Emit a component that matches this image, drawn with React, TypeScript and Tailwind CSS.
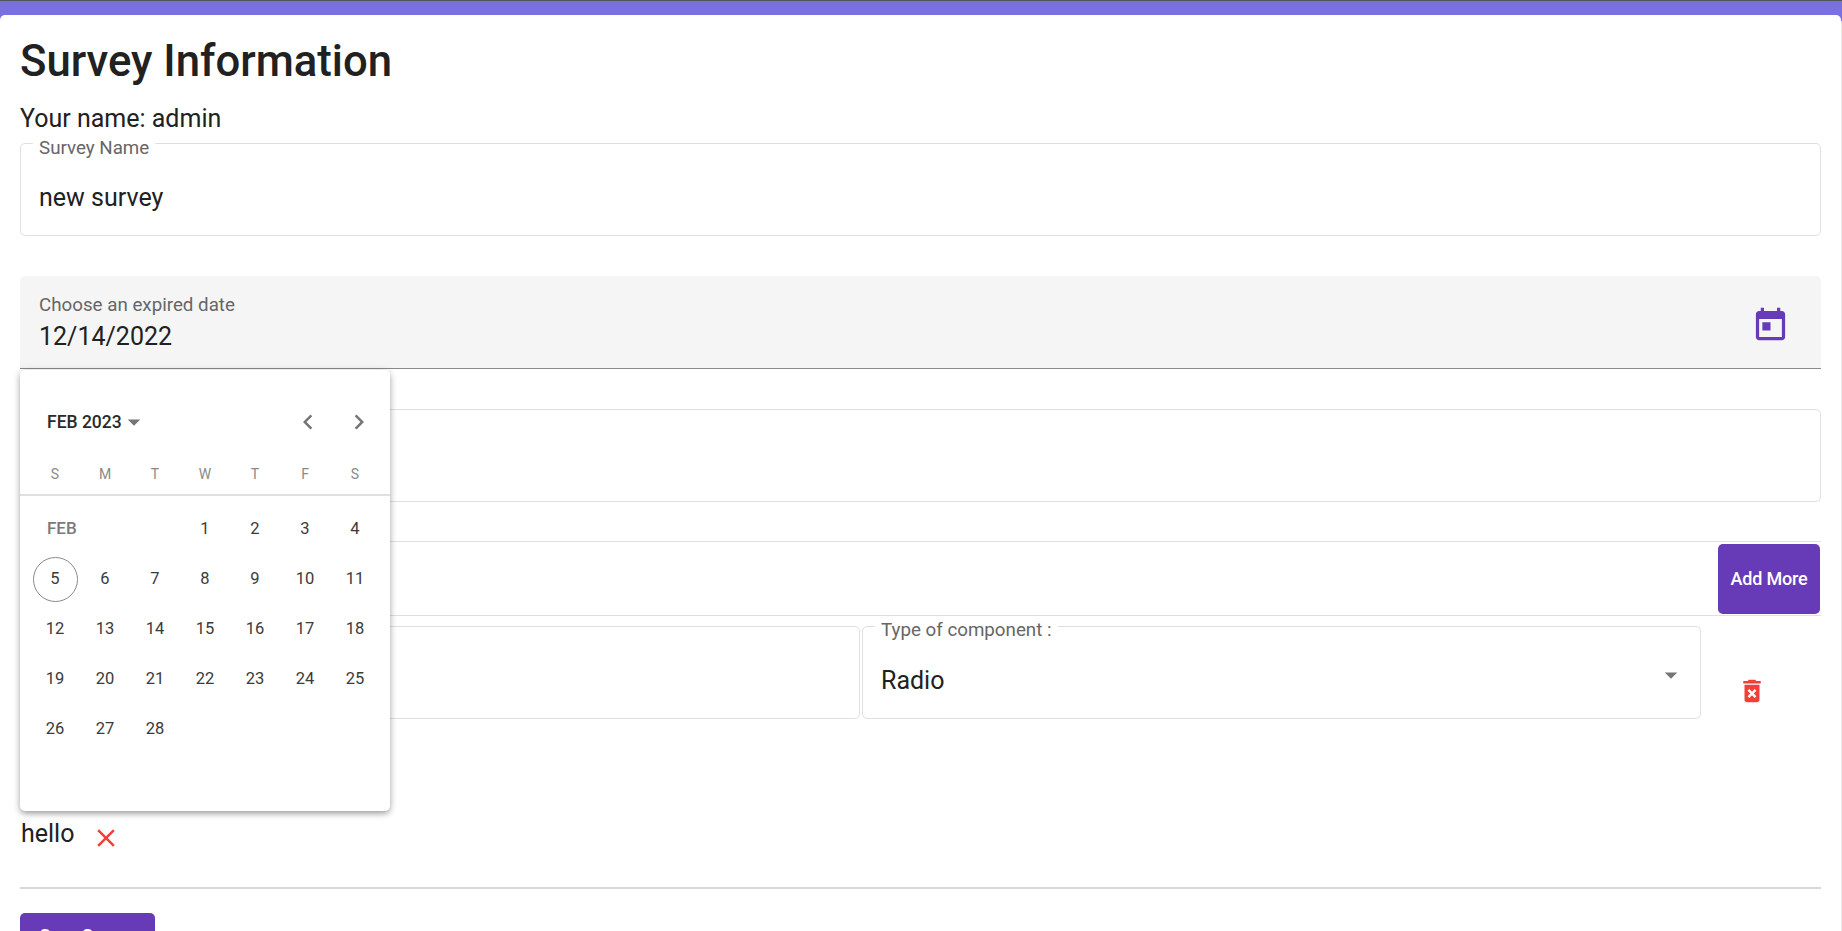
import type { ReactNode } from "react";

const roboto = { fontFamily: "Roboto, sans-serif" };

function Outlined({ label, labelClass, className, children }: { label?: string; labelClass?: string; className?: string; children?: ReactNode }) {
  return (
    <div className={`relative h-[93px] rounded-[5px] border border-[#e0e0e0] ${className ?? ""}`}>
      {label && (
        <span className={`absolute left-3 bg-white px-1.5 text-[18.75px] leading-[20px] text-[#666] ${labelClass ?? ""}`}>{label}</span>
      )}
      {children}
    </div>
  );
}

const weekdays = ["S", "M", "T", "W", "T", "F", "S"];
const days: (number | string | null)[] = [
  "FEB", null, null, 1, 2, 3, 4,
  5, 6, 7, 8, 9, 10, 11,
  12, 13, 14, 15, 16, 17, 18,
  19, 20, 21, 22, 23, 24, 25,
  26, 27, 28, null, null, null, null,
];

function CalendarPopup() {
  return (
    <div className="absolute top-[355px] left-5 h-[441px] w-[370px] rounded-[5px] bg-white shadow-[0_3px_6px_-1px_rgba(0,0,0,0.35),0_1px_10px_rgba(0,0,0,0.14)]">
      <div className="flex h-[103px] items-center pr-[16px] pl-[27px]">
        <span className="pt-[2px] text-[17.5px] font-medium text-[#2a2a2a]">FEB 2023</span>
        <svg viewBox="0 0 24 24" className="ml-[-3px] h-[30px] w-[30px] fill-[#757575]"><path d="M7 10l5 5 5-5z" /></svg>
        <svg viewBox="0 0 24 24" className="ml-auto h-[30px] w-[30px] fill-[#757575]"><path d="M15.41 16.59L10.83 12l4.58-4.59L14 6l-6 6 6 6 1.41-1.41z" /></svg>
        <svg viewBox="0 0 24 24" className="ml-[21px] h-[30px] w-[30px] fill-[#757575]"><path d="M8.59 16.59L13.17 12 8.59 7.41 10 6l6 6-6 6-1.41-1.41z" /></svg>
      </div>
      <div className="box-content grid h-[21px] grid-cols-[repeat(7,50px)] border-b-2 border-[#e0e0e0] pl-[10px]">
        {weekdays.map((d, i) => (
          <span key={i} className="mt-[-9px] text-center text-[14px] leading-[20px] text-[#8a8a8a]">{d}</span>
        ))}
      </div>
      <div className="mt-[8px] grid auto-rows-[50px] grid-cols-[repeat(7,50px)] pl-[10px]">
        {days.map((d, i) => {
          if (d === "FEB") return <span key={i} className="flex items-center pl-[17px] text-[17px] font-medium text-[#7a7a7a]">FEB</span>;
          return (
            <span key={i} className="flex items-center justify-center text-[16.5px] text-[#3a3a3a]">
              {d === 5 ? <span className="mt-[1px] flex h-[45px] w-[45px] items-center justify-center rounded-full border border-[#8a8a8a]">5</span> : d}
            </span>
          );
        })}
      </div>
    </div>
  );
}

export default function App() {
  return (
    <div className="h-[931px] overflow-hidden border-t border-[#555] bg-[linear-gradient(#7b70e0_20px,#e8e8e8_20px)]" style={roboto}>
      <div className="relative mt-[14px] mr-px h-[916px] rounded-t-[5px] bg-white pr-5 pl-5 text-[#212121]">
        <h1 className="h-[89px] pt-[21px] text-[43.7px] leading-[50px] font-medium">Survey Information</h1>
        <p className="h-[39px] text-[25px] leading-[29px]">Your name: admin</p>
        <Outlined label="Survey Name" labelClass="top-[-6px]">
          <span className="absolute top-[36px] left-[18px] text-[25px] leading-[36px]">new survey</span>
        </Outlined>
        <div className="relative mt-[40px] flex h-[93px] items-center justify-end rounded-t-[5px] border-b border-[#8a8a8a] bg-[#f5f5f5] pr-[31px]">
          <span className="absolute top-[18px] left-[19px] text-[18.75px] leading-[22px] text-[#666]">Choose an expired date</span>
          <span className="absolute top-[43px] left-[19px] text-[25px] leading-[36px]">12/14/2022</span>
          <svg viewBox="0 0 24 24" className="mt-[6px] h-[39px] w-[39px] fill-[#673ab7]">
            <path d="M19 3h-1V1h-2v2H8V1H6v2H5c-1.11 0-1.99.9-1.99 2L3 19c0 1.1.89 2 2 2h14c1.1 0 2-.9 2-2V5c0-1.1-.9-2-2-2zm0 16H5V8h14v11zM7 10h5v5H7z" />
          </svg>
        </div>
        <Outlined className="mt-[40px]" />
        <div className="mt-[39px] flex h-[75px] items-center justify-end border-y border-[#e0e0e0]">
          <button className="mr-px flex h-[70px] w-[102px] items-center justify-center rounded-[5px] bg-[#673ab7] text-[18px] font-medium tracking-[-0.2px] text-white">Add More</button>
        </div>
        <div className="mt-[10px] flex items-center">
          <Outlined className="w-[840px]" />
          <Outlined label="Type of component :" labelClass="top-[-7px]" className="ml-[2px] w-[839px]">
            <span className="absolute top-[36px] left-[18px] text-[25px] leading-[36px]">Radio</span>
            <svg viewBox="0 0 24 24" className="absolute top-[33px] right-[14px] h-[30px] w-[30px] fill-[#757575]"><path d="M7 10l5 5 5-5z" /></svg>
          </Outlined>
          <svg viewBox="0 0 24 24" className="mt-[37px] ml-[36px] h-[30px] w-[30px] fill-[#ef4139]">
            <path d="M6 19c0 1.1.9 2 2 2h8c1.1 0 2-.9 2-2V7H6v12zm2.46-7.12 1.41-1.41L12 12.59l2.12-2.12 1.41 1.41L13.41 14l2.12 2.12-1.41 1.41L12 15.41l-2.12 2.12-1.41-1.41L10.59 14l-2.13-2.12zM15.5 4l-1-1h-5l-1 1H5v2h14V4z" />
          </svg>
        </div>
        <div className="mt-[97px] flex h-[36px] items-center pl-[1px]">
          <span className="text-[25px] leading-[36px]">hello</span>
          <svg viewBox="0 0 24 24" className="mt-[8px] ml-[17px] h-[30px] w-[30px] fill-[#ef4139]">
            <path d="M19 6.41 17.59 5 12 10.59 6.41 5 5 6.41 10.59 12 5 17.59 6.41 19 12 13.41 17.59 19 19 17.59 13.41 12z" />
          </svg>
        </div>
        <hr className="mt-[35px] border-t-2 border-[#d8d8d8]" />
        <button className="mt-[24px] h-[48px] w-[135px] rounded-[5px] bg-[#673ab7] pb-[3px] text-[18px] font-medium tracking-[-0.2px] text-white">Save Survey</button>
        <CalendarPopup />
      </div>
    </div>
  );
}
